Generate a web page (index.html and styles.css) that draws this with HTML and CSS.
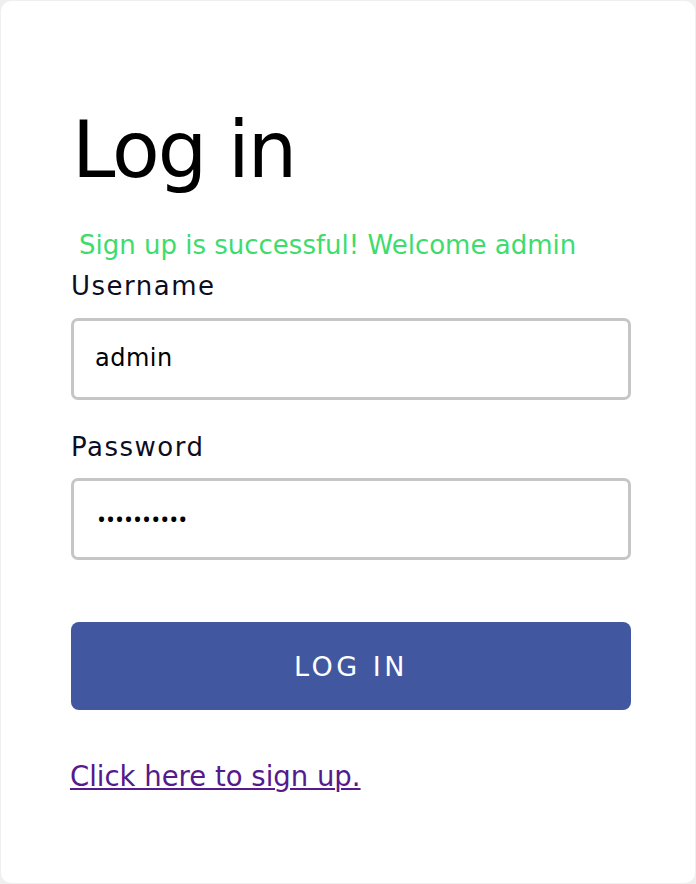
FILE: index.html
```html
<!DOCTYPE html>
<html>
<head>
<meta charset="utf-8">
<link rel="stylesheet" href="styles.css">
</head>
<body>
<main class="card">
  <h1 class="title">Log in</h1>
  <p class="success">Sign up is successful! Welcome admin</p>
  <form class="form">
    <label class="label" for="u">Username</label>
    <input class="field" id="u" type="text" value="admin">
    <label class="label label-pw" for="p">Password</label>
    <input class="field field-pw" id="p" type="password" value="1234567890">
    <button class="btn" type="button">LOG IN</button>
  </form>
  <a class="link" href="#">Click here to sign up.</a>
</main>
</body>
</html>
```
FILE: styles.css
```css
html, body {
  margin: 0;
  padding: 0;
  background: #efefef;
}
body {
  padding: 1px;
  font-family: "DejaVu Sans", sans-serif;
}
.card {
  box-sizing: border-box;
  background: #ffffff;
  border-radius: 10px;
  height: 882px;
  width: 694px;
  padding: 110px 64px 0 70px;
}
.title {
  margin: 0 0 0 1px;
  font-size: 78px;
  font-weight: 400;
  line-height: 78px;
  letter-spacing: -2px;
  color: #000;
}
.success {
  margin: 41px 0 0 8px;
  font-size: 26px;
  line-height: 30px;
  color: #3ddc6d;
}
.form {
  display: flex;
  flex-direction: column;
}
.label {
  font-size: 26px;
  line-height: 30px;
  letter-spacing: 1.5px;
  margin-top: 11px;
  color: #0d0d22;
}
.label-pw {
  margin-top: 32px;
}
.field {
  box-sizing: border-box;
  margin-top: 16.5px;
  height: 82px;
  width: 560px;
  border: 3px solid #c6c6c6;
  border-radius: 7px;
  padding: 0 0 2px 21px;
  font-family: "DejaVu Sans", sans-serif;
  font-size: 24px;
  letter-spacing: 0.5px;
  color: #000;
  background: #fff;
  outline: none;
}
.field-pw {
  font-family: "Open Sans", sans-serif;
  letter-spacing: 0;
  padding-left: 23px;
}
.btn {
  margin-top: 62px;
  height: 88px;
  width: 560px;
  border: none;
  border-radius: 8px;
  background: #4157a0;
  color: #fff;
  font-family: "DejaVu Sans", sans-serif;
  font-size: 27px;
  letter-spacing: 3.5px;
  padding: 0;
}
.link {
  display: inline-block;
  margin: 48.5px 0 0 -1px;
  font-size: 27.5px;
  line-height: 34px;
  color: #551a8b;
  text-decoration: underline;
  text-decoration-thickness: 2px;
  text-underline-offset: 2px;
}
```
